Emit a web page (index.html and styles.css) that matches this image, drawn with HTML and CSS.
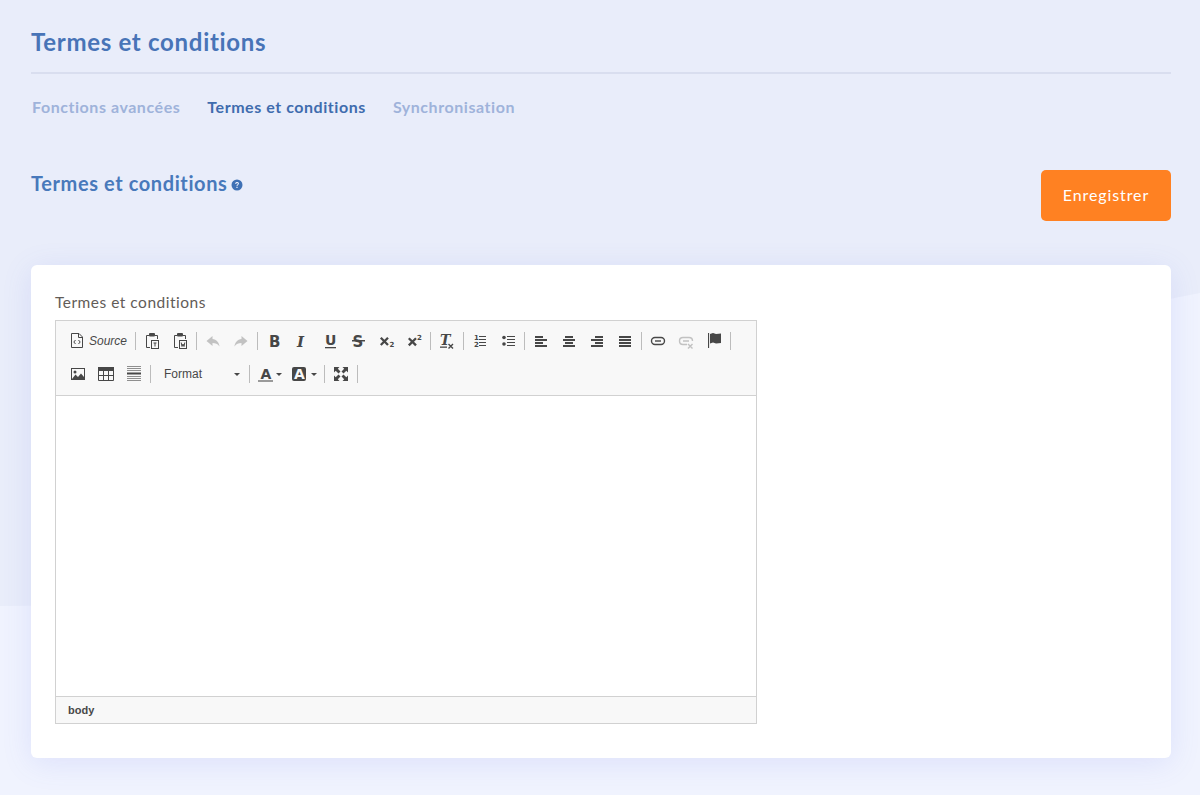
FILE: index.html
```html
<!DOCTYPE html>
<html lang="fr">
<head>
<meta charset="utf-8">
<title>Termes et conditions</title>
<link rel="stylesheet" href="styles.css">
</head>
<body>
<svg class="wave" viewBox="0 0 1200 795" preserveAspectRatio="none" aria-hidden="true"><path d="M0 606C200 606 400 590 600 500S1000 330 1200 293V795H0Z"/></svg>
<main class="page">
  <header class="head"><h1>Termes et conditions</h1></header>
  <nav class="tabs">
    <a>Fonctions avancées</a>
    <a class="active">Termes et conditions</a>
    <a>Synchronisation</a>
  </nav>
  <div class="section-row">
    <h2>Termes et conditions
      <svg class="help" viewBox="0 0 12 12"><circle cx="6" cy="6" r="5.5"/><path class="q" d="M4.1 4.7C4.2 3.6 5 3 6.1 3 7.200 3 8 3.700 8 4.600 8 6 6.500 5.900 6.500 7H5.500C5.500 5.400 6.900 5.500 6.900 4.700 6.900 4.200 6.600 4 6.100 4 5.600 4 5.300 4.300 5.200 4.900ZM5.400 7.800H6.600V9H5.400Z"/></svg>
    </h2>
    <button class="save">Enregistrer</button>
  </div>
  <section class="card">
    <label class="label">Termes et conditions</label>
    <div class="editor">
      <div class="toolbar">
        <div class="row">
          <span class="btn btn-source">
            <svg class="ico" viewBox="0 0 16 16"><path class="ln" d="M2.500 .5H10L13.500 4V14.500H2.500Z"/><path class="ln" d="M9.500 .5V4.500H13.500"/><path class="ln" d="M6.500 7 4.800 9 6.500 11M9.500 7 11.200 9 9.500 11"/></svg>
            <span class="src-text">Source</span>
          </span>
          <i class="sep"></i>
          <span class="btn"><svg class="ico" viewBox="0 0 16 16"><path class="ln" d="M5 2.500H2.500V14.500H6M11 2.500H13.500V6"/><rect class="fl" x="5" y="0" width="6" height="3.500" rx="1"/><rect class="ln" x="7.500" y="7.500" width="7" height="8"/><path class="ln" d="M9.500 10H12.500M11 10V13.500"/></svg></span>
          <span class="btn"><svg class="ico" viewBox="0 0 16 16"><path class="ln" d="M5 2.500H2.500V14.500H6M11 2.500H13.500V6"/><rect class="fl" x="5" y="0" width="6" height="3.500" rx="1"/><rect class="ln" x="7.500" y="7.500" width="7" height="8"/><path class="ln" d="M9.200 9.500 10 13.500 11 11 12 13.500 12.800 9.500"/></svg></span>
          <i class="sep"></i>
          <span class="btn off"><svg class="ico" viewBox="0 0 16 16"><path class="fl" d="M7.500 3 1.500 8 7.500 13V10C10.500 10 12.800 10.800 14.500 13.500 14.200 9.500 11.500 6.500 7.500 6Z"/></svg></span>
          <span class="btn off"><svg class="ico" viewBox="0 0 16 16"><path class="fl" d="M8.500 3 14.500 8 8.500 13V10C5.500 10 3.200 10.800 1.500 13.500 1.800 9.500 4.500 6.500 8.500 6Z"/></svg></span>
          <i class="sep"></i>
          <span class="btn"><svg class="ico" viewBox="0 0 16 16"><text class="g b" x="3" y="14">B</text></svg></span>
          <span class="btn"><svg class="ico" viewBox="0 0 16 16"><text class="g serif-it" x="3" y="14">I</text></svg></span>
          <span class="btn"><svg class="ico" viewBox="0 0 16 16"><text class="g u" x="3" y="12">U</text><rect class="fl" x="3" y="14" width="11" height="1.300"/></svg></span>
          <span class="btn"><svg class="ico" viewBox="0 0 16 16"><text class="g b" x="2.500" y="14">S</text><rect class="fl" x="2" y="7" width="13" height="1.500"/></svg></span>
          <span class="btn"><svg class="ico" viewBox="0 0 16 16"><path class="thick" d="M2.800 4.800 10 12M10 4.800 2.800 12"/><text class="tiny" x="11.500" y="14">2</text></svg></span>
          <span class="btn"><svg class="ico" viewBox="0 0 16 16"><path class="thick" d="M2.800 5.200 10 12.400M10 5.200 2.800 12.400"/><text class="tiny" x="11" y="7">2</text></svg></span>
          <i class="sep"></i>
          <span class="btn"><svg class="ico" viewBox="0 0 16 16"><text class="g serif-it tx" x="1" y="12">T</text><rect class="fl" x="1" y="13.500" width="7" height="1.300"/><path class="ln thk" d="M9.500 11 14 15.500M14 11 9.500 15.500"/></svg></span>
          <i class="sep"></i>
          <span class="btn"><svg class="ico" viewBox="0 0 16 16"><text class="tiny" x="2" y="7">1</text><text class="tiny" x="2" y="14">2</text><path class="ln" d="M7 3.500H14M7 6.500H14M7 9.500H14M7 12.500H14"/></svg></span>
          <span class="btn"><svg class="ico" viewBox="0 0 16 16"><circle class="fl" cx="4" cy="4.500" r="1.800"/><circle class="fl" cx="4" cy="11" r="1.800"/><path class="ln" d="M7 3.500H15M7 6.500H15M7 9.500H15M7 12.500H15"/></svg></span>
          <i class="sep"></i>
          <span class="btn"><svg class="ico" viewBox="0 0 16 16"><path class="fl" d="M2 3H10V5H2ZM2 6H14V8H2ZM2 9H10V11H2ZM2 12H14V14H2Z"/></svg></span>
          <span class="btn"><svg class="ico" viewBox="0 0 16 16"><path class="fl" d="M4 3H12V5H4ZM2 6H14V8H2ZM4 9H12V11H4ZM2 12H14V14H2Z"/></svg></span>
          <span class="btn"><svg class="ico" viewBox="0 0 16 16"><path class="fl" d="M6 3H14V5H6ZM2 6H14V8H2ZM6 9H14V11H6ZM2 12H14V14H2Z"/></svg></span>
          <span class="btn"><svg class="ico" viewBox="0 0 16 16"><path class="fl" d="M2 3H14V5H2ZM2 6H14V8H2ZM2 9H14V11H2ZM2 12H14V14H2Z"/></svg></span>
          <i class="sep"></i>
          <span class="btn"><svg class="ico" viewBox="0 0 16 16"><rect class="ln thk" x="1.500" y="4.500" width="13" height="7" rx="3.500"/><path class="ln thk" d="M5 8H11"/></svg></span>
          <span class="btn off"><svg class="ico" viewBox="0 0 16 16"><path class="ln thk" d="M9 11.500H5C3 11.500 1.500 10 1.500 8S3 4.500 5 4.500H11C13 4.500 14.500 6 14.500 8M5 8H11"/><path class="ln thk" d="M10 11 14.500 15.500M14.500 11 10 15.500"/></svg></span>
          <span class="btn"><svg class="ico" viewBox="0 0 16 16"><rect class="fl" x="2" y="0" width="1.100" height="15"/><path class="fl" d="M4 1 7 0 10 1 15 .5V10L10 10.500 7 9.500 4 10.500Z"/></svg></span>
          <i class="sep"></i>
        </div>
        <div class="row">
          <span class="btn"><svg class="ico" viewBox="0 0 16 16"><rect class="fl" x="1" y="2" width="14" height="12"/><rect class="wh" x="2" y="3" width="12" height="10"/><circle class="fl" cx="5" cy="6" r="1.500"/><path class="fl" d="M2 13 5.500 8.500 8 11 11 7.500 14 11V13Z"/></svg></span>
          <span class="btn"><svg class="ico" viewBox="0 0 16 16"><rect class="fl" x="0" y="1" width="16" height="4"/><path class="ln" d="M.5 1V14.500H15.500V1M.5 9.500H15.500M5.500 5V14.500M10.500 5V14.500"/></svg></span>
          <span class="btn"><svg class="ico" viewBox="0 0 16 16"><path class="gr" d="M1 .5H15M1 2.500H15M1 4.500H15M1 10.500H15M1 12.500H15M1 14.500H15"/><rect class="fl" x="1" y="6.500" width="14" height="2"/></svg></span>
          <i class="sep"></i>
          <span class="combo"><span class="combo-text">Format</span><i class="arrow"></i></span>
          <i class="sep"></i>
          <span class="btn btn-color"><svg class="ico" viewBox="0 0 16 16"><text class="g a" x="2.500" y="13">A</text><rect class="bar" x="0" y="14" width="15" height="2"/></svg><i class="arrow"></i></span>
          <span class="btn btn-color btn-last"><svg class="ico" viewBox="0 0 16 16"><rect class="fl" x="1" y="1" width="14" height="14" rx="2"/><text class="g a inv" x="3" y="12.500">A</text></svg><i class="arrow"></i></span>
          <i class="sep"></i>
          <span class="btn"><svg class="ico" viewBox="0 0 16 16"><path class="fl" d="M1 1H6.500L4.800 2.700 7.500 5.500 5.500 7.500 2.700 4.800 1 6.500ZM15 1V6.500L13.300 4.800 10.500 7.500 8.500 5.500 11.200 2.700 9.500 1ZM1 15V9.500L2.700 11.200 5.500 8.500 7.500 10.500 4.800 13.300 6.500 15ZM15 15H9.500L11.200 13.300 8.500 10.500 10.500 8.500 13.300 11.200 15 9.500Z"/></svg></span>
          <i class="sep"></i>
        </div>
      </div>
      <div class="content"></div>
      <div class="pathbar">body</div>
    </div>
  </section>
</main>
</body>
</html>
```
FILE: styles.css
```css
* { box-sizing: border-box; }
html, body { margin: 0; padding: 0; }
body {
  background: #e9edfa;
  font-family: "Lato", "Open Sans", sans-serif;
  height: 795px;
  overflow: hidden;
  position: relative;
}
.wave { position: absolute; left: 0; top: 0; width: 1200px; height: 795px; }
.wave path { fill: #f0f3fe; }
.page { position: relative; padding: 27px 29px 37px 31px; }
.head { border-bottom: 2px solid #d9deef; padding-bottom: 16px; }
h1 {
  margin: 0;
  font-size: 24px;
  line-height: 29px;
  font-weight: 700;
  letter-spacing: .7px;
  color: #4874b7;
}
.tabs { display: flex; gap: 27px; margin-top: 23px; padding-left: 1px; font-size: 16px; line-height: 19px; font-weight: 700; letter-spacing: .55px; color: #9fb3da; }
.tabs .active { color: #3f6cae; }
.section-row { display: flex; justify-content: space-between; align-items: flex-start; margin-top: 54px; }
h2 { margin: 0; font-size: 20px; line-height: 26px; font-weight: 700; letter-spacing: .6px; color: #4879bb; }
.help { width: 12px; height: 12px; vertical-align: 0; margin-left: -2px; }
.help circle { fill: #3f71b5; }
.help .q { fill: #e9edfa; }
.save {
  width: 130px; height: 51px; border: 0; border-radius: 5px;
  background: #ff8122; color: #fff; padding: 0 0 2px;
  font-family: inherit; font-size: 16px; letter-spacing: .9px;
}
.card {
  margin-top: 44px;
  background: #fff;
  border-radius: 6px;
  padding: 28px 24px 34px;
  box-shadow: 0 5px 30px rgba(90, 110, 230, .13);
}
.label { display: block; font-size: 15.500px; line-height: 18px; letter-spacing: .5px; color: #625c58; margin-bottom: 9px; }
.editor { width: 702px; border: 1px solid #d1d1d1; }
.toolbar { height: 75px; background: #f8f8f8; border-bottom: 1px solid #d1d1d1; padding: 4px 0 0 8px; }
.row { display: flex; align-items: flex-start; height: 33px; }
.btn { display: flex; align-items: center; justify-content: center; width: 28px; height: 27px; margin-top: 3px; padding-bottom: 1px; flex: none; }
.btn-source { width: 69px; justify-content: flex-start; padding-left: 5px; gap: 4px; }
.src-text { font: italic 12px "Liberation Sans", Arial, sans-serif; color: #484848; }
.btn.off svg { opacity: .3; }
.ico { width: 16px; height: 16px; display: block; flex: none; overflow: visible; }
.sep { display: block; width: 1px; height: 18px; background: #bcbcbc; margin: 7px 2px 0; flex: none; }
.ln { fill: none; stroke: #474747; stroke-width: 1; }
.thk { stroke-width: 1.400; }
.fl { fill: #474747; }
.wh { fill: #f8f8f8; }
.gr { fill: none; stroke: #8f8f8f; stroke-width: 1; }
.bar { fill: #9a9a9a; }
.thick { fill: none; stroke: #474747; stroke-width: 2.300; }
.g { font-family: "DejaVu Sans", sans-serif; font-weight: 700; font-size: 15px; fill: #474747; }
.g.u { font-size: 14px; }
.g.serif-it { font-family: "DejaVu Serif", serif; font-style: italic; font-size: 15px; }
.g.tx { font-size: 14px; }
.g.a { font-size: 14px; }
.g.inv { fill: #f8f8f8; font-size: 14px; }
.tiny { font-family: "DejaVu Sans", sans-serif; font-size: 7px; font-weight: 700; fill: #474747; }
.combo { display: flex; align-items: center; justify-content: space-between; width: 94px; height: 27px; margin-top: 3px; padding: 0 7px 1px 11px; flex: none; }
.combo-text { font: 12px "Liberation Sans", Arial, sans-serif; color: #484848; }
.arrow { display: block; width: 0; height: 0; border-style: solid; border-width: 3px 3px 0; border-color: #474747 transparent transparent; flex: none; }
.btn-color { width: 33px; justify-content: flex-start; padding-left: 6px; gap: 2px; }
.btn-last { width: 37px; gap: 4px; }
.content { height: 300px; background: #fff; }
.pathbar {
  height: 27px; background: #f8f8f8; border-top: 1px solid #d1d1d1;
  padding-left: 12px;
  font: 700 11px/26px "Liberation Sans", Arial, sans-serif;
  color: #484848;
}
```
